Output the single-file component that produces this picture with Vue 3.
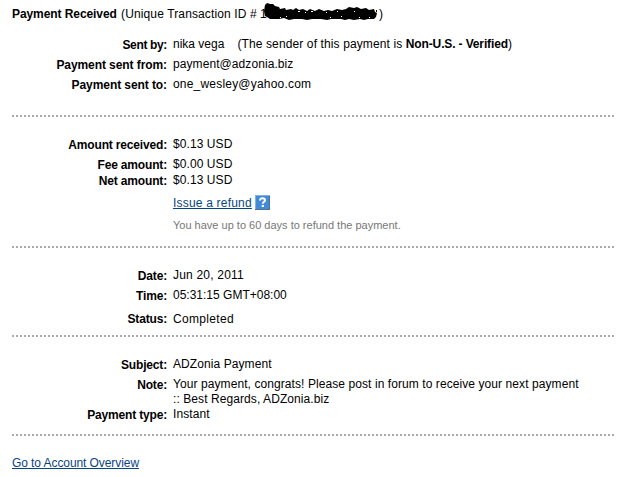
<template>
  <main class="details">
    <h1 class="title">
      <strong>Payment Received</strong>
      <span class="tid">(Unique Transaction ID #</span>
      <span class="one">1</span>
      <!-- Scribbled-out transaction number -->
      <svg class="scribble" width="116" height="18" viewBox="0 0 116 18" aria-hidden="true">
        <path class="ink" d="M2 8 3 2 5 0 8 1 11 1 13 3 17 4 18 6 23 5 24 7 29 6 31 7 34 5 37 7 41 6 45 8 48 6 53 8 57 6 62 8 66 7 70 8 75 6 80 7 84 6 87 4 92 5 95 4 99 6 104 5 107 7 112 6 113 9 115 10 114 14 112 16 106 16 102 17 98 16 92 17 87 16 83 17 79 16 73 16 69 16 65 17 59 16 54 16 50 16 45 17 40 16 36 16 32 16 27 17 22 15 17 16 12 16 8 16 5 14 3 13Z" />
        <path class="speck" d="M24 13.5h1M36 8.5h2M43 9.5h1M49 8.5h2M64 9.5h1M68 14.5h1M75 8.5h1M79 13.5h1M92 8.5h1M97 14.5h1M107 14.5h1M18 14.5h1" />
        <path class="ink" d="M114 7h1v2h-1z" />
      </svg>
      <span>)</span>
    </h1>

    <section v-for="section in sections" :key="section.id" :class="['section', section.id]">
      <div v-for="row in section.rows" :key="row.label" :class="['row', row.kind]">
        <div class="label">{{ row.label }}</div>
        <div class="value">
          <template v-if="row.kind === 'sender'">
            <span>nika vega</span>
            <span class="sender-info">(The sender of this payment is <strong>Non-U.S. - Verified</strong>)</span>
          </template>
          <template v-else>{{ row.value }}</template>
        </div>
      </div>

      <div v-if="section.id === 'amounts'" class="refund">
        <div class="refund-link">
          <a href="#">Issue a refund</a>
          <svg class="help" width="15" height="15" viewBox="0 0 15 15" role="img" aria-label="Help">
            <rect width="15" height="15" fill="#4289d6" />
            <path d="M0 .5h15M.5 0v15" stroke="#78b8df" />
            <path d="M0 14.5h15M14.5 1v14" stroke="#536f91" />
            <path d="M5 5.6C5 3.8 6 3.2 7.5 3.2S10 4 10 5.2c0 1.5-2.2 1.6-2.2 3.5" fill="none" stroke="#fff" stroke-width="2" />
            <path d="M6.7 10h2.2v2H6.7z" fill="#fff" />
          </svg>
        </div>
        <p class="hint">You have up to 60 days to refund the payment.</p>
      </div>
    </section>

    <a class="overview" href="#">Go to Account Overview</a>
  </main>
</template>

<script setup>
const sections = [
  {
    id: 'parties',
    rows: [
      { label: 'Sent by:', kind: 'sender' },
      { label: 'Payment sent from:', value: 'payment@adzonia.biz' },
      { label: 'Payment sent to:', value: 'one_wesley@yahoo.com', kind: 'recipient' }
    ]
  },
  {
    id: 'amounts',
    rows: [
      { label: 'Amount received:', value: '$0.13 USD' },
      { label: 'Fee amount:', value: '$0.00 USD', kind: 'fee' },
      { label: 'Net amount:', value: '$0.13 USD' }
    ]
  },
  {
    id: 'status',
    rows: [
      { label: 'Date:', value: 'Jun 20, 2011', kind: 'date' },
      { label: 'Time:', value: '05:31:15 GMT+08:00', kind: 'time' },
      { label: 'Status:', value: 'Completed', kind: 'state' }
    ]
  },
  {
    id: 'message',
    rows: [
      { label: 'Subject:', value: 'ADZonia Payment' },
      {
        label: 'Note:',
        value: 'Your payment, congrats! Please post in forum to receive your next payment\n:: Best Regards, ADZonia.biz',
        kind: 'note'
      },
      { label: 'Payment type:', value: 'Instant', kind: 'type' }
    ]
  }
]
</script>

<style>
body {
  margin: 0;
  background: #fff;
}
</style>

<style scoped>
.details {
  box-sizing: border-box;
  width: 624px;
  height: 477px;
  padding: 7px 10px 0 12px;
  overflow: hidden;
  font: 12px/15px "Liberation Sans", Arial, sans-serif;
  color: #000;
}

.title {
  display: flex;
  height: 15px;
  margin: 0 0 15px;
  font-size: 12px;
  font-weight: 400;
  white-space: nowrap;
}

.title strong {
  width: 105px;
  letter-spacing: -0.08px;
}

.tid {
  width: 137px;
  margin-left: 4px;
  letter-spacing: 0.13px;
}

.one {
  width: 2px;
  margin-left: 2px;
}

.scribble {
  flex: none;
  margin: -4px 1px 0 0;
}

.ink {
  fill: #000;
}

.speck {
  fill: none;
  stroke: #fff;
}

.section {
  box-sizing: border-box;
  width: 602px;
  /* 2px square dots, 2px apart */
  background: repeating-linear-gradient(90deg, #aaa 0 2px, transparent 2px 4px) left bottom / 100% 2px no-repeat;
}

.parties { height: 80px; }
.amounts { height: 131px; padding-top: 20px; }
.status { height: 89px; padding-top: 20px; }
.message { height: 99px; padding-top: 20px; }

.row {
  display: flex;
  height: 20px;
}

.row.fee { height: 16px; }
.row.time { height: 24px; }
.row.note { height: 30px; }

.label {
  flex: none;
  width: 155px;
  padding-top: 1px;
  margin-right: 6px;
  font-weight: 700;
  letter-spacing: -0.17px;
  text-align: right;
}

.parties .label { letter-spacing: -0.08px; }
.sender .label { letter-spacing: -0.35px; }
.state .label { padding-top: 0; }

.value {
  letter-spacing: 0.08px;
  white-space: pre;
}

.sender .value,
.time .value { letter-spacing: 0; }
.recipient .value,
.date .value { letter-spacing: 0.2px; }
.state .value { letter-spacing: 0.33px; }

.sender-info {
  margin-left: 13px;
  letter-spacing: 0.12px;
}

.sender-info strong {
  letter-spacing: -0.14px;
}

.refund {
  padding-left: 161px;
}

.refund-link {
  display: flex;
  height: 23px;
  padding-top: 3px;
}

.refund-link a {
  width: 79px;
  letter-spacing: 0.2px;
}

.help {
  margin: -1px 0 0 3px;
}

.hint {
  margin: -1px 0 0;
  font-size: 11px;
  color: #777;
}

a {
  color: #084482;
}

.overview {
  display: inline-block;
  margin-top: 20px;
  letter-spacing: -0.08px;
}
</style>
